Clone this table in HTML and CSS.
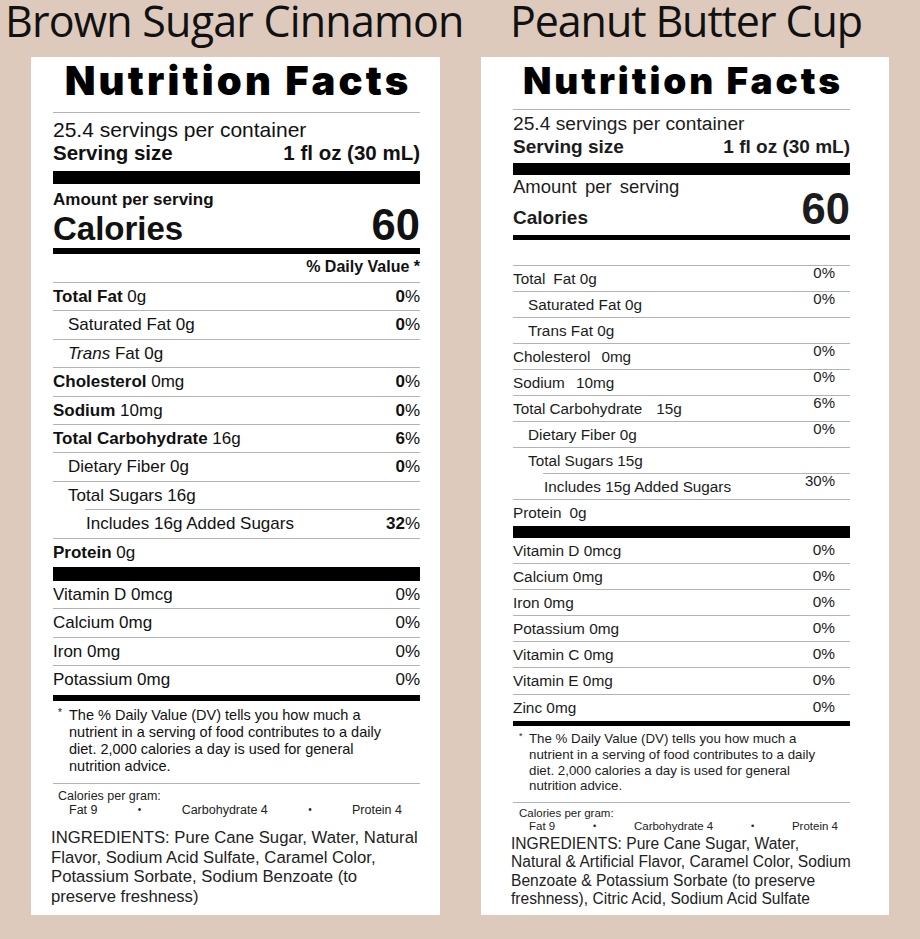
FILE: index.html
```html
<!DOCTYPE html>
<html lang="en">
<head>
<meta charset="utf-8">
<title>Nutrition Facts</title>
<link rel="stylesheet" href="styles.css">
</head>
<body>
<div class="page">
  <section class="col col-a">
    <h2 class="flavor">Brown Sugar Cinnamon</h2>
    <div class="label label-a">
      <div class="nf-title">Nutrition Facts</div>
      <div class="rule rule-top"></div>
      <div class="servings">25.4 servings per container</div>
      <div class="serving-size"><b>Serving size</b><b>1 fl oz (30 mL)</b></div>
      <div class="bar bar-xl"></div>
      <div class="amount">Amount per serving</div>
      <div class="calories"><span class="cal-label">Calories</span><span class="cal-num">60</span></div>
      <div class="bar bar-md"></div>
      <div class="dv-head">% Daily Value *</div>
      <div class="rule rule-dv"></div>
      <div class="rows">
        <div class="row"><span><b>Total Fat</b> 0g</span><span class="pct"><b>0</b>%</span></div>
        <div class="row ind1"><span>Saturated Fat 0g</span><span class="pct"><b>0</b>%</span></div>
        <div class="row ind1"><span><i>Trans</i> Fat 0g</span><span class="pct"></span></div>
        <div class="row"><span><b>Cholesterol</b> 0mg</span><span class="pct"><b>0</b>%</span></div>
        <div class="row"><span><b>Sodium</b> 10mg</span><span class="pct"><b>0</b>%</span></div>
        <div class="row"><span><b>Total Carbohydrate</b> 16g</span><span class="pct"><b>6</b>%</span></div>
        <div class="row ind1"><span>Dietary Fiber 0g</span><span class="pct"><b>0</b>%</span></div>
        <div class="row ind1 rule-indent"><span>Total Sugars 16g</span><span class="pct"></span></div>
        <div class="row ind2"><span>Includes 16g Added Sugars</span><span class="pct"><b>32</b>%</span></div>
        <div class="row last"><span><b>Protein</b> 0g</span><span class="pct"></span></div>
      </div>
      <div class="bar bar-xl2"></div>
      <div class="vits">
        <div class="vit"><span>Vitamin D 0mcg</span><span class="pct">0%</span></div>
        <div class="vit"><span>Calcium 0mg</span><span class="pct">0%</span></div>
        <div class="vit"><span>Iron 0mg</span><span class="pct">0%</span></div>
        <div class="vit last"><span>Potassium 0mg</span><span class="pct">0%</span></div>
      </div>
      <div class="bar bar-md2"></div>
      <div class="footnote"><span class="star">*</span><p>The % Daily Value (DV) tells you how much a<br>nutrient in a serving of food contributes to a daily<br>diet. 2,000 calories a day is used for general<br>nutrition advice.</p></div>
      <div class="rule rule-foot"></div>
      <div class="cpg">Calories per gram:</div>
      <div class="cpg-row"><span>Fat 9</span><span class="dot">•</span><span>Carbohydrate 4</span><span class="dot">•</span><span>Protein 4</span></div>
      <p class="ingredients">INGREDIENTS: Pure Cane Sugar, Water, Natural<br>Flavor, Sodium Acid Sulfate, Caramel Color,<br>Potassium Sorbate, Sodium Benzoate (to<br>preserve freshness)</p>
    </div>
  </section>

  <section class="col col-b">
    <h2 class="flavor">Peanut Butter Cup</h2>
    <div class="label label-b">
      <div class="nf-title">Nutrition Facts</div>
      <div class="rule rule-top"></div>
      <div class="servings">25.4 servings per container</div>
      <div class="serving-size"><b>Serving size</b><b>1 fl oz (30 mL)</b></div>
      <div class="bar bar-xl"></div>
      <div class="amount">Amount per serving</div>
      <div class="calories"><span class="cal-label">Calories</span><span class="cal-num">60</span></div>
      <div class="bar bar-md"></div>
      <div class="rule rule-dv"></div>
      <div class="rows">
        <div class="row"><span>Total<span class="gap-s"></span>Fat 0g</span><span class="pct">0%</span></div>
        <div class="row ind1"><span>Saturated Fat 0g</span><span class="pct">0%</span></div>
        <div class="row ind1"><span>Trans Fat 0g</span><span class="pct"></span></div>
        <div class="row"><span>Cholesterol<span class="gap-m"></span>0mg</span><span class="pct">0%</span></div>
        <div class="row"><span>Sodium<span class="gap-m"></span>10mg</span><span class="pct">0%</span></div>
        <div class="row"><span>Total Carbohydrate<span class="gap-l"></span>15g</span><span class="pct">6%</span></div>
        <div class="row ind1"><span>Dietary Fiber 0g</span><span class="pct">0%</span></div>
        <div class="row ind1 rule-indent"><span>Total Sugars 15g</span><span class="pct"></span></div>
        <div class="row ind2"><span>Includes 15g Added Sugars</span><span class="pct">30%</span></div>
        <div class="row last"><span>Protein<span class="gap-s"></span>0g</span><span class="pct"></span></div>
      </div>
      <div class="bar bar-xl2"></div>
      <div class="vits">
        <div class="vit"><span>Vitamin D 0mcg</span><span class="pct">0%</span></div>
        <div class="vit"><span>Calcium 0mg</span><span class="pct">0%</span></div>
        <div class="vit"><span>Iron 0mg</span><span class="pct">0%</span></div>
        <div class="vit"><span>Potassium 0mg</span><span class="pct">0%</span></div>
        <div class="vit"><span>Vitamin C 0mg</span><span class="pct">0%</span></div>
        <div class="vit"><span>Vitamin E 0mg</span><span class="pct">0%</span></div>
        <div class="vit last"><span>Zinc 0mg</span><span class="pct">0%</span></div>
      </div>
      <div class="bar bar-md2"></div>
      <div class="footnote"><span class="star">*</span><p>The % Daily Value (DV) tells you how much a<br>nutrient in a serving of food contributes to a daily<br>diet. 2,000 calories a day is used for general<br>nutrition advice.</p></div>
      <div class="rule rule-foot"></div>
      <div class="cpg">Calories per gram:</div>
      <div class="cpg-row"><span>Fat 9</span><span class="dot">•</span><span>Carbohydrate 4</span><span class="dot">•</span><span>Protein 4</span></div>
      <p class="ingredients">INGREDIENTS: Pure Cane Sugar, Water,<br>Natural &amp; Artificial Flavor, Caramel Color, Sodium<br>Benzoate &amp; Potassium Sorbate (to preserve<br>freshness), Citric Acid, Sodium Acid Sulfate</p>
    </div>
  </section>
</div>
</body>
</html>
```

FILE: styles.css
```css
html, body {
  margin: 0;
  padding: 0;
}
body {
  width: 920px;
  height: 939px;
  background: #ddcabd;
  overflow: hidden;
}
.page {
  display: flex;
  gap: 41px;
  padding-left: 31px;
}
.col {
  display: flex;
  flex-direction: column;
}
.col-a { width: 409px; }
.col-b { width: 408px; }

.flavor {
  margin: 0 0 15px 0;
  height: 42px;
  font-family: "Open Sans", "Liberation Sans", sans-serif;
  font-weight: 400;
  font-size: 43px;
  line-height: 42px;
  color: #111;
  white-space: nowrap;
}
.col-a .flavor { margin-left: -26px; letter-spacing: -0.8px; }
.col-b .flavor { margin-left: 29px; letter-spacing: -1.1px; }

.label {
  background: #fff;
  height: 858px;
  box-sizing: border-box;
  font-family: "Liberation Sans", Arial, sans-serif;
  color: #111;
  display: flex;
  flex-direction: column;
}
.label p { margin: 0; }
.label-a { padding: 0 20px 0 22px; }
.label-b { padding: 0 39px 0 32px; color: #1c1c1c; }

.nf-title {
  font-family: Inter, "Liberation Sans", sans-serif;
  font-weight: 900;
  text-align: center;
  line-height: 48px;
  height: 48px;
  white-space: nowrap;
  color: #000;
}
.label-a .nf-title { font-size: 40px; letter-spacing: 3.2px; text-indent: 3.2px; }
.label-b .nf-title { font-size: 37px; letter-spacing: 2.9px; text-indent: 2.9px; }

.rule { height: 1px; background: #b3b3b3; }
.bar { background: #000; }

/* ---------- Label A ---------- */
.label-a .rule-top { margin-top: 7px; }
.label-a .servings { margin-top: 5px; font-size: 21px; line-height: 23px; }
.serving-size { display: flex; justify-content: space-between; }
.label-a .serving-size { font-size: 20.5px; line-height: 23px; }
.label-a .bar-xl { margin-top: 7px; height: 13px; }
.label-a .amount { margin-top: 6px; font-size: 17px; line-height: 19px; font-weight: 700; }
.calories { display: flex; justify-content: space-between; align-items: baseline; font-weight: 700; }
.label-a .calories { margin-top: -1px; }
.label-a .cal-label { font-size: 33px; line-height: 34px; }
.label-a .cal-num { font-size: 43.5px; line-height: 34px; }
.label-a .bar-md { margin-top: 2px; height: 6px; }
.label-a .dv-head { margin-top: 4px; font-size: 16px; line-height: 18px; font-weight: 700; text-align: right; }
.label-a .rule-dv { margin-top: 6px; }

.row, .vit {
  display: flex;
  justify-content: space-between;
  box-sizing: border-box;
  border-bottom: 1px solid #b3b3b3;
  white-space: nowrap;
}
.row.last, .vit.last { border-bottom: none; }
.rule-indent { border-bottom: none; }

.label-a .row { height: 28.4px; line-height: 27.4px; font-size: 17px; }
.label-a .row.last { line-height: 28.4px; }
.label-a .ind1 { padding-left: 15px; }
.label-a .ind2 { padding-left: 33px; }
.label-a .rule-indent {
  background: linear-gradient(#b3b3b3, #b3b3b3) no-repeat right bottom / calc(100% - 32px) 1px;
}
.label-a .bar-xl2 { height: 14px; }
.label-a .vit { height: 28.5px; line-height: 28.5px; font-size: 17px; }
.label-a .bar-md2 { height: 6px; }

.footnote { display: flex; }
.star { display: block; }
.label-a .footnote { margin-top: 6px; padding-left: 5px; font-size: 14.5px; line-height: 16.9px; }
.label-a .star { width: 11px; font-size: 10px; line-height: 12px; }
.label-a .rule-foot { margin-top: 8px; }
.label-a .cpg { margin-top: 5px; padding-left: 5px; font-size: 12.5px; line-height: 14px; color: #222; }
.cpg-row { display: flex; justify-content: space-between; color: #222; }
.label-a .cpg-row { padding: 0 18px 0 16px; font-size: 12.5px; line-height: 14px; }
.dot { font-size: 0.8em; }
.label-a .ingredients { margin: 11.5px 0 0 -2px; font-size: 16.7px; line-height: 19.7px; color: #222; white-space: nowrap; }

/* ---------- Label B ---------- */
.label-b .rule-top { margin-top: 4px; }
.label-b .servings { margin-top: 2px; font-size: 19.2px; line-height: 23px; }
.label-b .serving-size { font-size: 19px; line-height: 23px; }
.label-b .bar-xl { margin-top: 5px; height: 12px; }
.label-b .amount { margin-top: 2px; font-size: 18.5px; line-height: 20px; word-spacing: 3px; }
.label-b .calories { margin-top: -2px; }
.label-b .cal-label { font-size: 19px; line-height: 20px; }
.label-b .cal-num { font-size: 43.5px; line-height: 28px; }
.label-b .bar-md { margin-top: 6.5px; height: 5px; }
.label-b .rule-dv { margin-top: 25px; }

.label-b .row { height: 26px; line-height: 25px; font-size: 15.3px; }
.label-b .row .pct { font-size: 15px; line-height: 13px; padding-right: 15px; align-self: flex-start; }
.label-b .ind1 { padding-left: 15px; }
.label-b .ind2 { padding-left: 31px; }
.label-b .rule-indent {
  background: linear-gradient(#b3b3b3, #b3b3b3) no-repeat right bottom / calc(100% - 30px) 1px;
}
.gap-s { display: inline-block; width: 8px; }
.gap-m { display: inline-block; width: 11px; }
.gap-l { display: inline-block; width: 14px; }
.label-b .bar-xl2 { height: 12px; }
.label-b .vit { height: 26.2px; line-height: 25.2px; font-size: 15.4px; }
.label-b .vit .pct { font-size: 15.4px; line-height: 23px; padding-right: 15px; align-self: flex-start; }
.label-b .bar-md2 { height: 5px; }
.label-b .footnote { margin-top: 5.6px; padding-left: 6px; font-size: 13.3px; line-height: 15.6px; }
.label-b .star { width: 10px; font-size: 9px; line-height: 11px; }
.label-b .rule-foot { margin-top: 8px; }
.label-b .cpg { margin-top: 4.5px; padding-left: 6px; font-size: 11.5px; line-height: 13px; }
.label-b .cpg-row { padding: 0 12px 0 16px; font-size: 11.5px; line-height: 13px; }
.label-b .ingredients { margin: 2px 0 0 -2px; font-size: 15.6px; line-height: 18.2px; color: #222; white-space: nowrap; }
```
